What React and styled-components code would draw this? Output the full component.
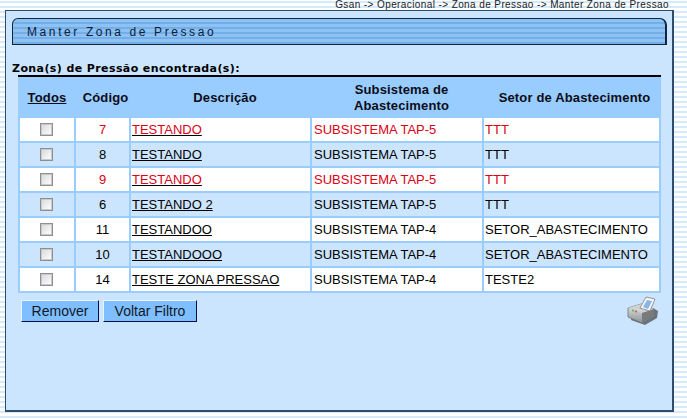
import styled, { createGlobalStyle } from 'styled-components';

const GlobalStyle = createGlobalStyle`
  html, body { margin: 0; padding: 0; }
  body {
    height: 419px;
    overflow: hidden;
    font-family: "Liberation Sans", Arial, sans-serif;
    background: repeating-linear-gradient(to bottom, #ffffff 0, #ffffff 1px, #d6eafe 1px, #d6eafe 3px, #ffffff 3px, #ffffff 5px);
  }
`;

const Breadcrumb = styled.div`
  height: 10px;
  width: 669px;
  text-align: right;
  font-size: 10px;
  line-height: 10px;
  letter-spacing: 0.4px;
  color: #222;
  white-space: nowrap;
`;

const Panel = styled.div`
  box-sizing: border-box;
  width: 669px;
  height: 402px;
  margin-left: 5px;
  padding: 7px 6px 0;
  background: #cce5ff;
  border: 1px solid #2f4b6e;
  border-right-width: 2px;
  border-bottom-width: 2px;
`;

const TitleBar = styled.div`
  box-sizing: border-box;
  height: 27px;
  width: 655px;
  padding-left: 14px;
  border: 1px solid #14263f;
  border-right-width: 2px;
  border-radius: 6px 7px 0 0;
  background: repeating-linear-gradient(to bottom, #8cc2f4 0, #8cc2f4 3px, #75aee6 3px, #75aee6 5px);
  font-size: 12px;
  line-height: 26px;
  letter-spacing: 2.6px;
  color: #0b1c3a;
  white-space: nowrap;
`;

const ResultLabel = styled.div`
  margin-top: 17px;
  height: 13px;
  font-family: "DejaVu Sans", Verdana, sans-serif;
  font-weight: 700;
  font-size: 11px;
  line-height: 13px;
  letter-spacing: 0.4px;
  color: #000;
  white-space: nowrap;
`;

const Table = styled.table`
  table-layout: fixed;
  width: 643px;
  margin-left: 6px;
  border-collapse: separate;
  border-spacing: 2px;
  border-top: 2px solid #000;
  background: #99ccff;
`;

const HeadCell = styled.th`
  padding: 0 0 0 ${p => p.$shift || 0}px;
  height: 37px;
  font-size: 13px;
  line-height: 16px;
  letter-spacing: 0.15px;
  font-weight: 700;
  color: #0c0c18;
  text-align: center;
  text-decoration: ${p => (p.$underlined ? 'underline' : 'none')};
`;

const Row = styled.tr`
  background: ${p => (p.$odd ? '#ffffff' : '#cce5ff')};
  color: ${p => (p.$alert ? '#dc0014' : '#000')};
`;

const Cell = styled.td`
  padding: 0 0 0 ${p => p.$pad || 0}px;
  height: 23px;
  font-size: 13px;
  line-height: 22px;
  text-align: ${p => (p.$center ? 'center' : 'left')};
  white-space: nowrap;
`;

const NameLink = styled.a`
  color: inherit;
  text-decoration: underline;
  text-decoration-color: #000;
`;

const Check = styled.input.attrs({ type: 'checkbox' })`
  appearance: none;
  display: block;
  box-sizing: border-box;
  width: 13px;
  height: 13px;
  margin: 0 0 0 20px;
  border: 1px solid #8f8f8f;
  outline: none;
  background: linear-gradient(135deg, #d4d7db 0%, #eff0f2 60%, #ffffff 100%);
  box-shadow: inset 0 0 0 1px #c9c9c9;
`;

const Actions = styled.div`
  display: flex;
  align-items: flex-start;
  justify-content: space-between;
  width: 637px;
  margin: 7px 0 0 9px;
`;

const ButtonGroup = styled.div`
  display: flex;
  gap: 4px;
`;

const Button = styled.button`
  box-sizing: border-box;
  height: 22px;
  width: ${p => p.$width}px;
  padding: 0;
  border: 1px solid;
  border-color: #e8f3ff #00104d #00104d #e8f3ff;
  background: #80bfff;
  font-family: "Liberation Sans", Arial, sans-serif;
  font-size: 14px;
  line-height: 18px;
  color: #101828;
`;

const PrinterIcon = styled.svg`
  display: block;
  width: 32px;
  height: 32px;
  margin: -5px -1px 0 0;
`;

const rows = [
  { code: 7, name: 'TESTANDO', system: 'SUBSISTEMA TAP-5', sector: 'TTT', alert: true },
  { code: 8, name: 'TESTANDO', system: 'SUBSISTEMA TAP-5', sector: 'TTT' },
  { code: 9, name: 'TESTANDO', system: 'SUBSISTEMA TAP-5', sector: 'TTT', alert: true },
  { code: 6, name: 'TESTANDO 2', system: 'SUBSISTEMA TAP-5', sector: 'TTT' },
  { code: 11, name: 'TESTANDOO', system: 'SUBSISTEMA TAP-4', sector: 'SETOR_ABASTECIMENTO' },
  { code: 10, name: 'TESTANDOOO', system: 'SUBSISTEMA TAP-4', sector: 'SETOR_ABASTECIMENTO' },
  { code: 14, name: 'TESTE ZONA PRESSAO', system: 'SUBSISTEMA TAP-4', sector: 'TESTE2' },
];

function Printer() {
  return (
    <PrinterIcon viewBox="0 0 32 32">
      <defs>
        <linearGradient id="printerBody" x1="0" y1="0" x2="0" y2="1">
          <stop offset="0" stopColor="#e6e8e8" />
          <stop offset="1" stopColor="#8e9294" />
        </linearGradient>
      </defs>
      <path d="M4 25 L18 30 L30 23 L31 16 L26 13 L6 17 Z" fill="#4a4c50" opacity="0.75" />
      <path d="M1 13 L14 9 L27 14 L27 21 L15 28 L1 22 Z" fill="url(#printerBody)" stroke="#6e7274" strokeWidth="0.8" />
      <path d="M1 13 L15 18 L27 14 L14 9 Z" fill="#cfd2d3" />
      <path d="M15 18 L27 14 L27 21 L15 28 Z" fill="#777b7e" />
      <path d="M13 13 L19 2 L28 4 L23 16 Z" fill="#f4f6f8" stroke="#7c8084" strokeWidth="0.8" />
      <path d="M16 12 L20 5 L25 6 L21 14 Z" fill="#8ab4e6" />
      <circle cx="6" cy="15.5" r="1.1" fill="#58b858" />
      <circle cx="9" cy="16.5" r="1.1" fill="#d85a50" />
    </PrinterIcon>
  );
}

export default function App() {
  return (
    <>
      <GlobalStyle />
      <Breadcrumb>Gsan -&gt; Operacional -&gt; Zona de Pressao -&gt; Manter Zona de Pressao</Breadcrumb>
      <Panel>
        <TitleBar>Manter Zona de Pressao</TitleBar>
        <ResultLabel>Zona(s) de Pressão encontrada(s):</ResultLabel>
        <Table>
          <colgroup>
            <col width="54" />
            <col width="53" />
            <col width="179" />
            <col width="170" />
            <col width="175" />
          </colgroup>
          <thead>
            <tr>
              <HeadCell $underlined>Todos</HeadCell>
              <HeadCell $shift={6}>Código</HeadCell>
              <HeadCell $shift={9}>Descrição</HeadCell>
              <HeadCell $shift={9}>Subsistema de<br />Abastecimento</HeadCell>
              <HeadCell $shift={6}>Setor de Abastecimento</HeadCell>
            </tr>
          </thead>
          <tbody>
            {rows.map((row, i) => (
              <Row key={row.code} $odd={i % 2 === 0} $alert={row.alert}>
                <Cell><Check /></Cell>
                <Cell $center>{row.code}</Cell>
                <Cell $pad={1}><NameLink href="#">{row.name}</NameLink></Cell>
                <Cell $pad={2}>{row.system}</Cell>
                <Cell $pad={1}>{row.sector}</Cell>
              </Row>
            ))}
          </tbody>
        </Table>
        <Actions>
          <ButtonGroup>
            <Button $width={78}>Remover</Button>
            <Button $width={94}>Voltar Filtro</Button>
          </ButtonGroup>
          <Printer />
        </Actions>
      </Panel>
    </>
  );
}
